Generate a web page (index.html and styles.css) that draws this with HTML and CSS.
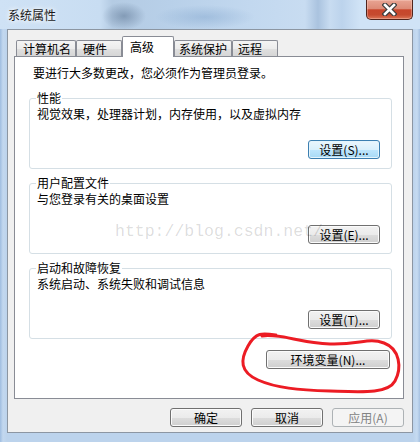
FILE: index.html
```html
<!DOCTYPE html>
<html>
<head>
  <meta charset="utf-8">
  <title>系统属性</title>
  <link rel="stylesheet" href="styles.css">
</head>
<body>
  <div class="window">
    <div class="titlebar">
      <span class="title">系统属性</span>
      <div class="close">
        <svg width="15" height="13" viewBox="0 0 15 13">
          <path d="M3 2 L12 11 M12 2 L3 11" stroke="#3b3b3b" stroke-width="5" stroke-linecap="square"/>
          <path d="M3 2 L12 11 M12 2 L3 11" stroke="#ffffff" stroke-width="2.6" stroke-linecap="square"/>
        </svg>
      </div>
    </div>

    <div class="client">
      <div class="tabs">
        <div class="tab tab-name">计算机名</div>
        <div class="tab tab-hw">硬件</div>
        <div class="tab tab-adv active">高级</div>
        <div class="tab tab-prot">系统保护</div>
        <div class="tab tab-remote">远程</div>
      </div>

      <div class="page">
        <p class="note">要进行大多数更改，您必须作为管理员登录。</p>

        <fieldset class="group">
          <legend>性能</legend>
          <div class="desc">视觉效果，处理器计划，内存使用，以及虚拟内存</div>
          <div class="btn-row"><button class="btn focused">设置(S)...</button></div>
        </fieldset>

        <fieldset class="group">
          <legend>用户配置文件</legend>
          <div class="desc">与您登录有关的桌面设置</div>
          <div class="btn-row"><button class="btn">设置(E)...</button></div>
        </fieldset>

        <fieldset class="group last">
          <legend>启动和故障恢复</legend>
          <div class="desc">系统启动、系统失败和调试信息</div>
          <div class="btn-row"><button class="btn">设置(T)...</button></div>
        </fieldset>

        <div class="env-row"><button class="btn env">环境变量(N)...</button></div>
      </div>

      <div class="actions">
        <button class="btn">确定</button>
        <button class="btn">取消</button>
        <button class="btn" disabled>应用(A)</button>
      </div>
    </div>

    <div class="watermark">http://blog.csdn.net/</div>

    <svg class="scribble" width="420" height="442" viewBox="0 0 420 442">
      <path d="M262 336 C 280 333, 300 343, 330 344 S 368 337, 384 343 S 402 368, 395 381 S 362 392, 330 391 S 276 388, 258 380 S 240 360, 248 346 S 262 333, 276 335"
            fill="none" stroke="#ec1c24" stroke-width="3" stroke-linecap="round"/>
    </svg>
  </div>
</body>
</html>
```

FILE: styles.css
```css
body {
  margin: 0;
  font-family: "Noto Sans CJK SC", sans-serif;
  font-size: 12px;
  color: #000;
}

.window {
  position: relative;
  width: 420px;
  height: 442px;
  display: flex;
  flex-direction: column;
  background: linear-gradient(to right, #9fbde0 0, #c3d8ef 3px, #bcd3ec 7px, #bcd3ec 413px, #c6dbf1 417px, #a7c2e2 420px);
  overflow: hidden;
}

.titlebar {
  height: 29px;
  display: flex;
  align-items: flex-start;
  padding-left: 8px;
  background:
    radial-gradient(ellipse 22px 14px at 124px 16px, rgba(90, 115, 145, 0.55), rgba(90, 115, 145, 0)),
    radial-gradient(ellipse 50px 12px at 205px 17px, rgba(110, 150, 195, 0.35), rgba(110, 150, 195, 0)),
    linear-gradient(to right, #cfe2f5 0, #c8ddf2 100px, #b4cbe3 112px, #b8d0e9 170px, #c2d8ef 250px, #c8dcf1 305px, #aac3df 318px, #c8dcf1 330px, #bcd3ec 342px, #d0e3f6 360px);
}

.title {
  margin-top: 6px;
  line-height: 17px;
  color: #1a1a1a;
  text-shadow: 0 0 4px #fff, 0 0 6px #fff;
}

.close {
  margin-left: auto;
  margin-right: 7px;
  width: 47px;
  height: 20px;
  box-sizing: border-box;
  border: 1px solid #50241c;
  border-top: none;
  border-radius: 0 0 5px 5px;
  background: linear-gradient(#e8a493 0%, #dd8b77 45%, #c8462c 52%, #c54a2f 78%, #dc7657 100%);
  box-shadow: inset 0 0 0 1px rgba(255, 220, 210, 0.35);
  display: flex;
  justify-content: center;
  align-items: center;
}

.client {
  margin: 0 7px;
  height: 404px;
  box-sizing: border-box;
  border: 1px solid #8c96a2;
  background: #f0f0f0;
  padding: 6px 8px 0 6px;
}

.tabs {
  height: 20px;
  display: flex;
  align-items: flex-end;
  padding-left: 2px;
}

.tab {
  height: 16px;
  box-sizing: border-box;
  border: 1px solid #898c95;
  border-bottom: none;
  border-radius: 2px 2px 0 0;
  padding-left: 6px;
  line-height: 15px;
  white-space: nowrap;
  background: linear-gradient(#f4f4f4 0%, #ececec 50%, #e0e0e0 51%, #d6d6d6 100%);
}

.tab-name { width: 60px; }
.tab-hw { width: 46px; }
.tab-prot { width: 58px; padding-left: 4px; }
.tab-remote { width: 46px; padding-left: 5px; }

.tab.active {
  width: 52px;
  height: 21px;
  margin-bottom: -1px;
  padding-left: 7px;
  padding-top: 2px;
  line-height: 16px;
  background: #fff;
  position: relative;
  z-index: 1;
}

.page {
  height: 343px;
  box-sizing: border-box;
  border: 1px solid #898c95;
  background: #fff;
  padding: 8px 11px 0 14px;
}

.note {
  margin: 0 0 9px 4px;
  line-height: 16px;
}

.group {
  margin: 0 0 6px;
  padding: 0 11px 9px 7px;
  border: 1px solid #d5dfe5;
  border-radius: 3px;
}

.group.last {
  margin-bottom: 0;
}

.group legend {
  margin-left: -1px;
  padding: 0 1px;
  line-height: 16px;
}

.desc {
  line-height: 16px;
}

.btn-row {
  display: flex;
  justify-content: flex-end;
  margin-top: 18px;
}

.btn {
  width: 72px;
  height: 19px;
  box-sizing: border-box;
  padding: 0;
  border: 1px solid #707070;
  border-radius: 3px;
  font-family: "Noto Sans CJK SC", sans-serif;
  font-size: 12px;
  line-height: 17px;
  color: #000;
  background: linear-gradient(#f2f2f2 0%, #ebebeb 50%, #dddddd 51%, #cfcfcf 100%);
  box-shadow: inset 0 0 0 1px #fbfbfb;
}

.btn.focused {
  border-color: #3c7fb1;
  background: linear-gradient(#eaf6fd 0%, #d9f0fc 50%, #bee6fd 51%, #a7d9f5 100%);
  box-shadow: inset 0 0 0 1px #e4f4fc;
}

.btn:disabled {
  border-color: #adb2b5;
  background: #f4f4f4;
  color: #838383;
  box-shadow: none;
}

.env-row {
  display: flex;
  justify-content: flex-end;
  padding-right: 2px;
  margin-top: 11px;
}

.btn.env {
  width: 124px;
}

.actions {
  display: flex;
  justify-content: flex-end;
  gap: 9px;
  margin-top: 9px;
}

.watermark {
  position: absolute;
  left: 115px;
  top: 222px;
  font-family: "Liberation Mono", monospace;
  font-size: 16.5px;
  line-height: 20px;
  color: rgba(0, 0, 0, 0.14);
}

.scribble {
  position: absolute;
  left: 0;
  top: 0;
  pointer-events: none;
}
```
